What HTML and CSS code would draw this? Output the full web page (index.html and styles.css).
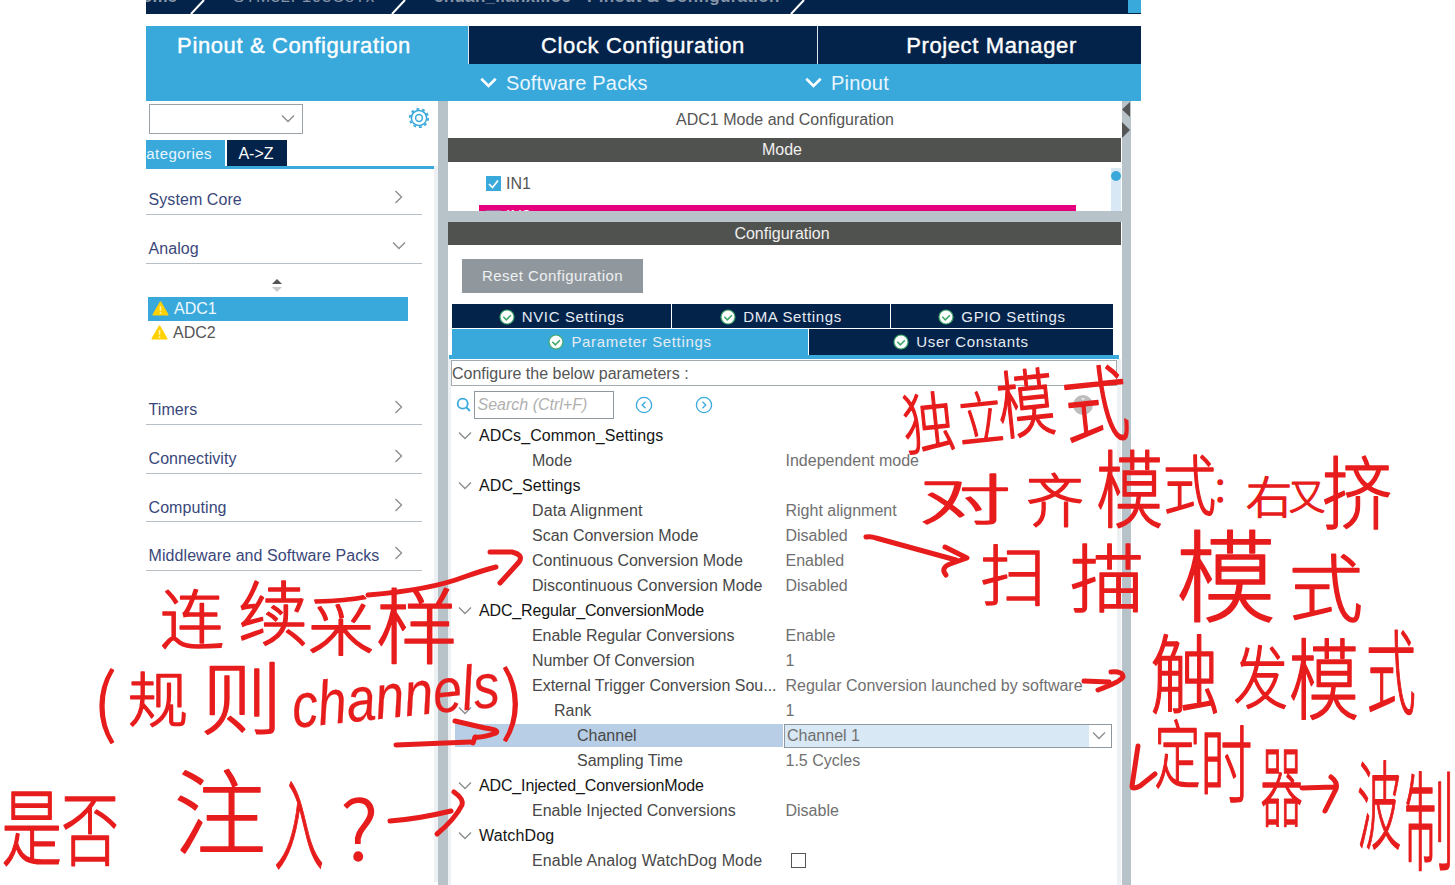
FILE: index.html
```html
<!DOCTYPE html>
<html lang="en">
<head>
<meta charset="utf-8">
<title>Pinout &amp; Configuration</title>
<link rel="stylesheet" href="styles.css">
</head>
<body>
<svg class="defs" width="0" height="0">
  <symbol id="right" viewBox="0 0 10 14"><path d="M1.5 1 7.5 7l-6 6"/></symbol>
  <symbol id="down" viewBox="0 0 14 10"><path d="M1 1.5l6 6 6-6"/></symbol>
  <symbol id="ok" viewBox="0 0 16 16"><circle cx="8" cy="8" r="7" fill="#fff" stroke="#3fa868" stroke-width="1.2"/><path d="M4.3 7.8l3 3 4.6-4.6" fill="none" stroke="#3fa868" stroke-width="1.6"/></symbol>
  <symbol id="warn" viewBox="0 0 17 15"><path d="M8.5 1.2 15.8 13.8H1.2z" fill="#ffd100" stroke="#ffd100" stroke-width="1.6" stroke-linejoin="round"/><path d="M8.5 5v5M8.5 11.3v1.6" stroke="#fff3b0" stroke-width="1.5"/></symbol>
</svg>
<div class="app">
  <nav class="crumbs">
    <span class="c1">Home</span><svg class="slash" viewBox="0 0 18 14"><path d="M2 14 15 0"/></svg>
    <span class="c2">STM32F103C8Tx</span><svg class="slash" viewBox="0 0 18 14"><path d="M2 14 15 0"/></svg>
    <span class="c3">chuan_lianxi.ioc - Pinout &amp; Configuration</span><svg class="slash" viewBox="0 0 18 14"><path d="M2 14 15 0"/></svg>
    <i class="crumb-end"></i>
  </nav>
  <div class="tabs"><div class="tab on">Pinout &amp; Configuration</div><div class="tab">Clock Configuration</div><div class="tab">Project Manager</div></div>
  <div class="subbar">
    <span class="sp"><svg class="chev"><use href="#down"/></svg>Software Packs</span>
    <span class="po"><svg class="chev"><use href="#down"/></svg>Pinout</span>
  </div>
  <div class="main">
    <aside class="side">
      <div class="filter">
        <div class="combo"><svg class="dn"><use href="#down"/></svg></div>
        <svg class="gear" viewBox="0 0 22 22"><circle cx="11" cy="11" r="3.4"/><circle cx="11" cy="11" r="7.6"/><circle class="teeth" cx="11" cy="11" r="9.2"/></svg>
      </div>
      <div class="sidetabs"><div class="cat"><span>Categories</span></div><div class="az">A-&gt;Z</div></div>
      <div class="groups">
        <div class="group">System Core<svg class="rt"><use href="#right"/></svg></div>
        <div class="group">Analog<svg class="dn"><use href="#down"/></svg></div>
        <div class="periph">
          <svg class="sort" viewBox="0 0 10 13"><path d="M0 5 5 0l5 5z" fill="#555"/><path d="M0 8h10l-5 5z" fill="#ccc"/></svg>
          <div class="item sel"><svg class="w"><use href="#warn"/></svg>ADC1</div>
          <div class="item"><svg class="w"><use href="#warn"/></svg>ADC2</div>
        </div>
        <div class="group">Timers<svg class="rt"><use href="#right"/></svg></div>
        <div class="group">Connectivity<svg class="rt"><use href="#right"/></svg></div>
        <div class="group">Computing<svg class="rt"><use href="#right"/></svg></div>
        <div class="group">Middleware and Software Packs<svg class="rt"><use href="#right"/></svg></div>
      </div>
    </aside>
    <div class="split"></div>
    <section class="panel">
      <div class="title">ADC1 Mode and Configuration</div>
      <div class="bar">Mode</div>
      <div class="mode">
        <div class="chk"><svg viewBox="0 0 15 15"><rect width="15" height="15" fill="#39a9dc"/><path d="M3 8l3.5 3.5 5.5-7" fill="none" stroke="#fff" stroke-width="1.7"/></svg>IN1</div>
        <div class="in2"><i></i><span>IN2</span></div>
        <div class="scroll"><i></i></div>
      </div>
      <div class="hsplit"></div>
      <div class="bar">Configuration</div>
      <div class="reset">Reset Configuration</div>
      <div class="ctabs t1"><div><svg><use href="#ok"/></svg>NVIC Settings</div><div><svg><use href="#ok"/></svg>DMA Settings</div><div><svg><use href="#ok"/></svg>GPIO Settings</div></div>
      <div class="ctabs t2"><div class="on"><svg><use href="#ok"/></svg>Parameter Settings</div><div><svg><use href="#ok"/></svg>User Constants</div></div>
      <div class="rule"></div>
      <div class="params">
        <div class="hint">Configure the below parameters :</div>
        <div class="tools">
          <svg class="mag" viewBox="0 0 16 16"><circle cx="6.7" cy="6.7" r="5"/><path d="M10.5 10.5 14 14"/></svg>
          <div class="search">Search (Ctrl+F)</div>
          <svg class="rnd" viewBox="0 0 18 18"><circle cx="9" cy="9" r="7.6"/><path d="M10.5 5.7 7.2 9l3.3 3.3"/></svg>
          <svg class="rnd" viewBox="0 0 18 18"><circle cx="9" cy="9" r="7.6"/><path d="M7.5 5.7 10.8 9l-3.3 3.3"/></svg>
          <div class="info">i</div>
        </div>
        <div class="tree">
          <div class="row head"><svg class="dn"><use href="#down"/></svg><b>ADCs_Common_Settings</b></div>
          <div class="row"><b>Mode</b><span>Independent mode</span></div>
          <div class="row head"><svg class="dn"><use href="#down"/></svg><b>ADC_Settings</b></div>
          <div class="row wide"><b>Data Alignment</b><span>Right alignment</span></div>
          <div class="row"><b>Scan Conversion Mode</b><span>Disabled</span></div>
          <div class="row"><b>Continuous Conversion Mode</b><span>Enabled</span></div>
          <div class="row"><b>Discontinuous Conversion Mode</b><span>Disabled</span></div>
          <div class="row head tight"><svg class="dn"><use href="#down"/></svg><b>ADC_Regular_ConversionMode</b></div>
          <div class="row snug"><b>Enable Regular Conversions</b><span>Enable</span></div>
          <div class="row snug"><b>Number Of Conversion</b><span>1</span></div>
          <div class="row"><b>External Trigger Conversion Sou...</b><span>Regular Conversion launched by software</span></div>
          <div class="row rank"><svg class="dn"><use href="#down"/></svg><b>Rank</b><span>1</span></div>
          <div class="row deep active"><b>Channel</b><span>Channel 1<em><svg class="dn"><use href="#down"/></svg></em></span></div>
          <div class="row deep"><b>Sampling Time</b><span>1.5 Cycles</span></div>
          <div class="row head tight"><svg class="dn"><use href="#down"/></svg><b>ADC_Injected_ConversionMode</b></div>
          <div class="row"><b>Enable Injected Conversions</b><span>Disable</span></div>
          <div class="row head wide"><svg class="dn"><use href="#down"/></svg><b>WatchDog</b></div>
          <div class="row wide"><b>Enable Analog WatchDog Mode</b><span><i class="box"></i></span></div>
        </div>
      </div>
    </section>
    <div class="rsplit"><svg viewBox="0 0 10 38"><path d="M9 1v15L1 8.500zM1 21v16l8-8z" fill="#555"/></svg></div>
  </div>
</div>
<svg class="notes" viewBox="0 0 1455 885" lang="zh-CN">
  <g class="words">
    <text transform="translate(0 5) rotate(-6 1010 420) scale(.78 1)"><tspan x="1158" y="434" font-size="66">独</tspan><tspan x="1229" y="432" font-size="58">立</tspan><tspan x="1281" y="428" font-size="74">模</tspan><tspan x="1365" y="440" font-size="84">式</tspan></text>
    <text><tspan x="919" y="520" font-size="54" textLength="92" lengthAdjust="spacingAndGlyphs">对</tspan><tspan x="1026" y="522" font-size="58">齐</tspan></text>
    <text transform="scale(.8 1)"><tspan x="1370" y="521" font-size="84">模</tspan><tspan x="1454" y="510" font-size="66">式</tspan></text>
    <text><tspan x="1215" y="501" font-size="42">:</tspan><tspan x="1246" y="514" font-size="44" textLength="46" lengthAdjust="spacingAndGlyphs">右</tspan><tspan x="1289" y="510" font-size="36">又</tspan></text>
    <text transform="scale(.88 1)" x="1502" y="523" font-size="80">挤</text>
    <text><tspan x="980" y="600" font-size="66">扫</tspan><tspan x="1070" y="606" font-size="74">描</tspan></text>
    <text><tspan x="1176" y="614" font-size="100">模</tspan><tspan x="1289" y="616" font-size="74">式</tspan></text>
    <text transform="scale(.8 1)"><tspan x="1438" y="707" font-size="86">触</tspan><tspan x="1542" y="703" font-size="68">发</tspan></text>
    <text transform="scale(.8 1)" x="1611" y="712" font-size="88">模</text>
    <text transform="scale(.54 1)" x="2530" y="707" font-size="92">式</text>
    <text transform="scale(.62 1)"><tspan x="1862" y="782" font-size="74">定</tspan><tspan x="1936" y="796" font-size="84">时</tspan></text>
    <text transform="scale(.48 1)" x="2626" y="819" font-size="88">器</text>
    <text transform="scale(.46 1)"><tspan x="2950" y="841" font-size="96">波</tspan><tspan x="3052" y="862" font-size="108">制</tspan></text>
    <text><tspan x="160" y="643" font-size="64">连</tspan><tspan x="238" y="640" font-size="70">续</tspan></text>
    <text><tspan x="308" y="650" font-size="66">采</tspan><tspan x="376" y="657" font-size="82">样</tspan></text>
    <text><tspan x="93" y="729" font-size="74">(</tspan><tspan x="128" y="722" font-size="60">规</tspan></text>
    <text transform="scale(1.05 1)" x="191" y="728" font-size="78">则</text>
    <text class="latin" transform="translate(294 728) rotate(-6) scale(1.04 1.25)" font-size="50">channels</text>
    <text x="501" y="727" font-size="74">)</text>
    <text transform="scale(.72 1)"><tspan x="2" y="859" font-size="84">是</tspan><tspan x="85" y="859" font-size="80">否</tspan></text>
    <text x="174" y="847" font-size="92">注</text>
    <text transform="scale(.5 1)" x="548" y="862" font-size="100">入</text>
    <text x="341" y="860" font-size="82">?</text>
  </g>
  <g class="marks">
    <path d="M368 595Q430 590 464 577Q484 570 496 567M490 552H512Q524 555 519 562L500 583"/>
    <path d="M866 537Q871 536 876 538L956 560M945 547L967 558L950 564Q940 568 946 575"/>
    <path d="M1084 681L1109 682M1111 672Q1123 671 1123 677Q1120 682 1098 690"/>
    <path d="M1138 746L1132 786Q1132 790 1140 786L1155 774"/>
    <path d="M1302 788L1334 787M1331 777Q1338 782 1336 789L1325 811"/>
    <path d="M396 745L470 742M455 721L485 728Q500 730 496 733Q482 738 475 737L473 743"/>
    <path d="M390 821Q418 819 451 811M454 792Q464 799 462 805Q455 819 437 834"/>
  </g>
</svg>
</body>
</html>
```
FILE: styles.css
```css
* { box-sizing: border-box; }
body { margin: 0; width: 1455px; height: 885px; overflow: hidden; background: #fff; position: relative; font: 16px/20px "Liberation Sans", Arial, sans-serif; color: #555; }
svg { flex: none; }
.defs { position: absolute; }
.app { margin-left: 146px; width: 995px; height: 885px; display: flex; flex-direction: column; }
.crumbs { height: 14px; background: #03234b; display: flex; overflow: hidden; color: #8795a8; font-weight: bold; font-size: 17px; line-height: 20px; white-space: nowrap; }
.crumbs span { margin-top: -13px; }
.c1 { width: 43px; display: flex; justify-content: flex-end; padding-right: 12px; }
.c2 { width: 183px; padding-left: 26px; font-weight: normal; letter-spacing: .6px; }
.c3 { width: 381px; padding-left: 26px; letter-spacing: .3px; }
.slash { width: 18px; height: 14px; fill: none; stroke: #fff; stroke-width: 2; }
.crumb-end { width: 13px; height: 13px; background: #39a9dc; margin-left: auto; }
.tabs { margin-top: 12px; height: 38px; display: grid; grid-template-columns: 322px 349px 324px; flex: none; }
.tab { background: #03234b; color: #fff; font-size: 22px; letter-spacing: .62px; line-height: 40px; text-align: center; border-left: 1px solid #dfe6ee; -webkit-text-stroke: .4px #fff; }
.tab.on { background: #39a9dc; border: 0; padding-right: 26px; white-space: nowrap; }
.tab:last-child { padding-left: 24px; }
.subbar { height: 37px; background: #39a9dc; color: #eaf6fc; font-size: 20px; display: flex; align-items: center; flex: none; letter-spacing: .2px; }
.subbar span { display: flex; align-items: center; gap: 9px; }
.sp { margin-left: 334px; width: 325px; }
.chev { width: 17px; height: 12px; fill: none; stroke: #fff; stroke-width: 2.2; }
.main { flex: 1; display: flex; min-height: 0; }
.side { width: 292px; }
.filter { height: 39px; padding: 3px 8px 0 3px; display: flex; justify-content: space-between; }
.combo { width: 154px; height: 30px; border: 1.5px solid #9aa2a8; display: flex; align-items: center; justify-content: flex-end; padding-right: 7px; }
.dn { width: 14px; height: 10px; fill: none; stroke: #8b8f92; stroke-width: 1.4; }
.rt { width: 10px; height: 14px; fill: none; stroke: #8b8f92; stroke-width: 1.4; }
.gear { width: 22px; height: 22px; margin-top: 3px; fill: none; stroke: #39a9dc; stroke-width: 1.5; }
.teeth { stroke-width: 1.8; stroke-dasharray: 2.89 2.89; }
.sidetabs { height: 29px; display: flex; border-bottom: 3px solid #39a9dc; color: #fff; font-size: 15px; letter-spacing: .45px; line-height: 27px; width: 290px; }
.cat { width: 79px; background: #39a9dc; overflow: hidden; display: flex; justify-content: flex-end; padding-right: 13px; color: #eaf6fc; }
.az { margin-left: 2px; width: 60px; background: #03234b; text-align: center; letter-spacing: 0; font-size: 16px; padding-right: 2px; }
.groups { border-right: 4px solid #eef1f4; height: 716px; margin-top: -3px; padding-right: 12px; }
.group { height: 48.9px; border-bottom: 1px solid #b5bfc5; padding: 24px 16px 0 2.500px; color: #39477a; display: flex; justify-content: space-between; letter-spacing: .08px; }
.group .rt { margin-right: 2px; }
.group .dn { margin-top: 2px; }
.periph { height: 112px; padding: 15px 14px 0 2px; }
.sort { display: block; width: 10px; height: 13px; margin: 0 0 5px 124px; }
.item { height: 24px; display: flex; align-items: center; gap: 5px; padding-left: 3px; }
.item.sel { background: #39a9dc; color: #eef8fd; padding-left: 4px; }
.w { width: 17px; height: 15px; }
.split { width: 10px; background: #b7c3c9; }
.panel { width: 674px; display: flex; flex-direction: column; }
.title { height: 37px; line-height: 37px; text-align: center; }
.bar { height: 23px; background: #50524f; color: #f0f0f0; line-height: 23px; text-align: center; width: 673px; padding-right: 5px; flex: none; }
.title + .bar { height: 24px; }
.mode { height: 49px; display: grid; grid-template-columns: 38px 590px 35px 10px; grid-template-rows: 43px 7px; overflow: hidden; flex: none; }
.chk { grid-column: 2; display: flex; align-items: center; gap: 5px; }
.chk svg { width: 15px; height: 15px; }
.in2 { grid-column: 1 / 3; grid-row: 2; margin-left: 31px; background: #e6007e; color: #fff; display: flex; padding-left: 7px; gap: 5px; line-height: 20px; overflow: hidden; width: 597px; height: 7px; }
.in2 i { width: 15px; height: 3px; margin-top: 5px; background: #a8579a; }
.in2 span { margin-top: 2px; }
.scroll { grid-column: 4; grid-row: 1 / 3; margin-top: 6px; background: #d9e8f5; padding-top: 3px; }
.scroll i { display: block; width: 10px; height: 10px; border-radius: 50%; background: #39a9dc; }
.hsplit { height: 11px; background: #b7c3c9; flex: none; }
.reset { margin: 14px 0 0 14px; width: 181px; height: 34px; background: #90989e; color: #eef0f1; font-size: 15px; letter-spacing: .45px; line-height: 34px; text-align: center; flex: none; }
.ctabs { width: 661px; margin-left: 4px; display: grid; gap: 1px; font-size: 15px; letter-spacing: .65px; color: #e6ecf2; flex: none; }
.ctabs div { background: #03234b; display: flex; justify-content: center; align-items: center; gap: 7px; padding-top: 1px; }
.ctabs svg { width: 16px; height: 16px; }
.t1 { margin-top: 11px; height: 24px; grid-template-columns: 219px 218px 222px; }
.t2 { margin-top: 1px; height: 26px; grid-template-columns: 356px 304px; }
.t2 div { padding: 0; }
.t2 .on { background: #39a9dc; }
.rule { width: 670px; height: 4px; background: #39a9dc; margin-left: 1px; flex: none; }
.params { width: 673px; border-left: 3px solid #eef1f4; border-right: 4px solid #eef1f4; flex: 1; min-height: 0; }
.hint { height: 26px; margin-top: 1px; border: 1.5px solid #a5acb0; line-height: 25px; width: 666px; }
.tools { height: 37px; padding-top: 1px; display: flex; align-items: center; }
.mag { width: 16px; height: 16px; margin-left: 5px; fill: none; stroke: #39a9dc; stroke-width: 1.8; }
.search { width: 140px; height: 28px; margin-left: 2px; border: 1.5px solid #8f989e; font-style: italic; color: #b0b0b0; line-height: 26px; padding-left: 2.500px; }
.rnd { width: 18px; height: 18px; margin-left: 21px; fill: none; stroke: #39a9dc; stroke-width: 1.3; }
.rnd + .rnd { margin-left: 42px; }
.info { width: 20px; height: 20px; border-radius: 50%; background: #bdbdbd; color: #eee; font-weight: bold; text-align: center; margin-left: 360px; }
.tree { padding-left: 4px; }
.row { height: 25px; display: flex; align-items: center; line-height: 25px; white-space: nowrap; }
.row b { font-weight: normal; color: #484848; width: 253px; margin-left: 77px; }
.row .dn { margin-left: 3px; }
.row.head b { margin-left: 7px; color: #151515; letter-spacing: .1px; }
.row.head.tight b { letter-spacing: -.14px; }
.row.wide b, .row.head.wide b { letter-spacing: .15px; }
.row.snug b { letter-spacing: -.05px; }
.row.rank b { margin-left: 82px; width: 231px; }
.row.deep b { padding-left: 122px; margin-left: 0; width: 330px; }
.row span { color: #707070; padding-left: .5px; }
.row.active b { background: #b8cee6; height: 23px; line-height: 23px; width: 328px; }
.row.active span { margin-left: 1px; width: 328px; height: 24px; line-height: 22px; border: 1px solid #8f989e; background: #d9e8f5; padding-left: 2px; display: flex; justify-content: space-between; }
.row em { width: 22px; background: #fff; display: flex; align-items: center; }
.box { display: block; width: 15px; height: 15px; border: 1.5px solid #555; margin-left: 5px; }
.rsplit { width: 9px; background: #b7c3c9; }
.rsplit svg { display: block; width: 10px; height: 38px; margin-left: -1px; }
.notes { position: absolute; left: 0; top: 0; width: 1455px; height: 885px; }
.words { fill: #e71c1c; stroke: #e71c1c; stroke-width: 1.5; stroke-linejoin: round; font-family: "Noto Sans CJK SC", sans-serif; font-weight: 300; }
.latin { font-family: "Liberation Sans", sans-serif; font-style: italic; stroke-width: .2; }
.marks { fill: none; stroke: #e71c1c; stroke-width: 5; stroke-linecap: round; stroke-linejoin: round; }
```
